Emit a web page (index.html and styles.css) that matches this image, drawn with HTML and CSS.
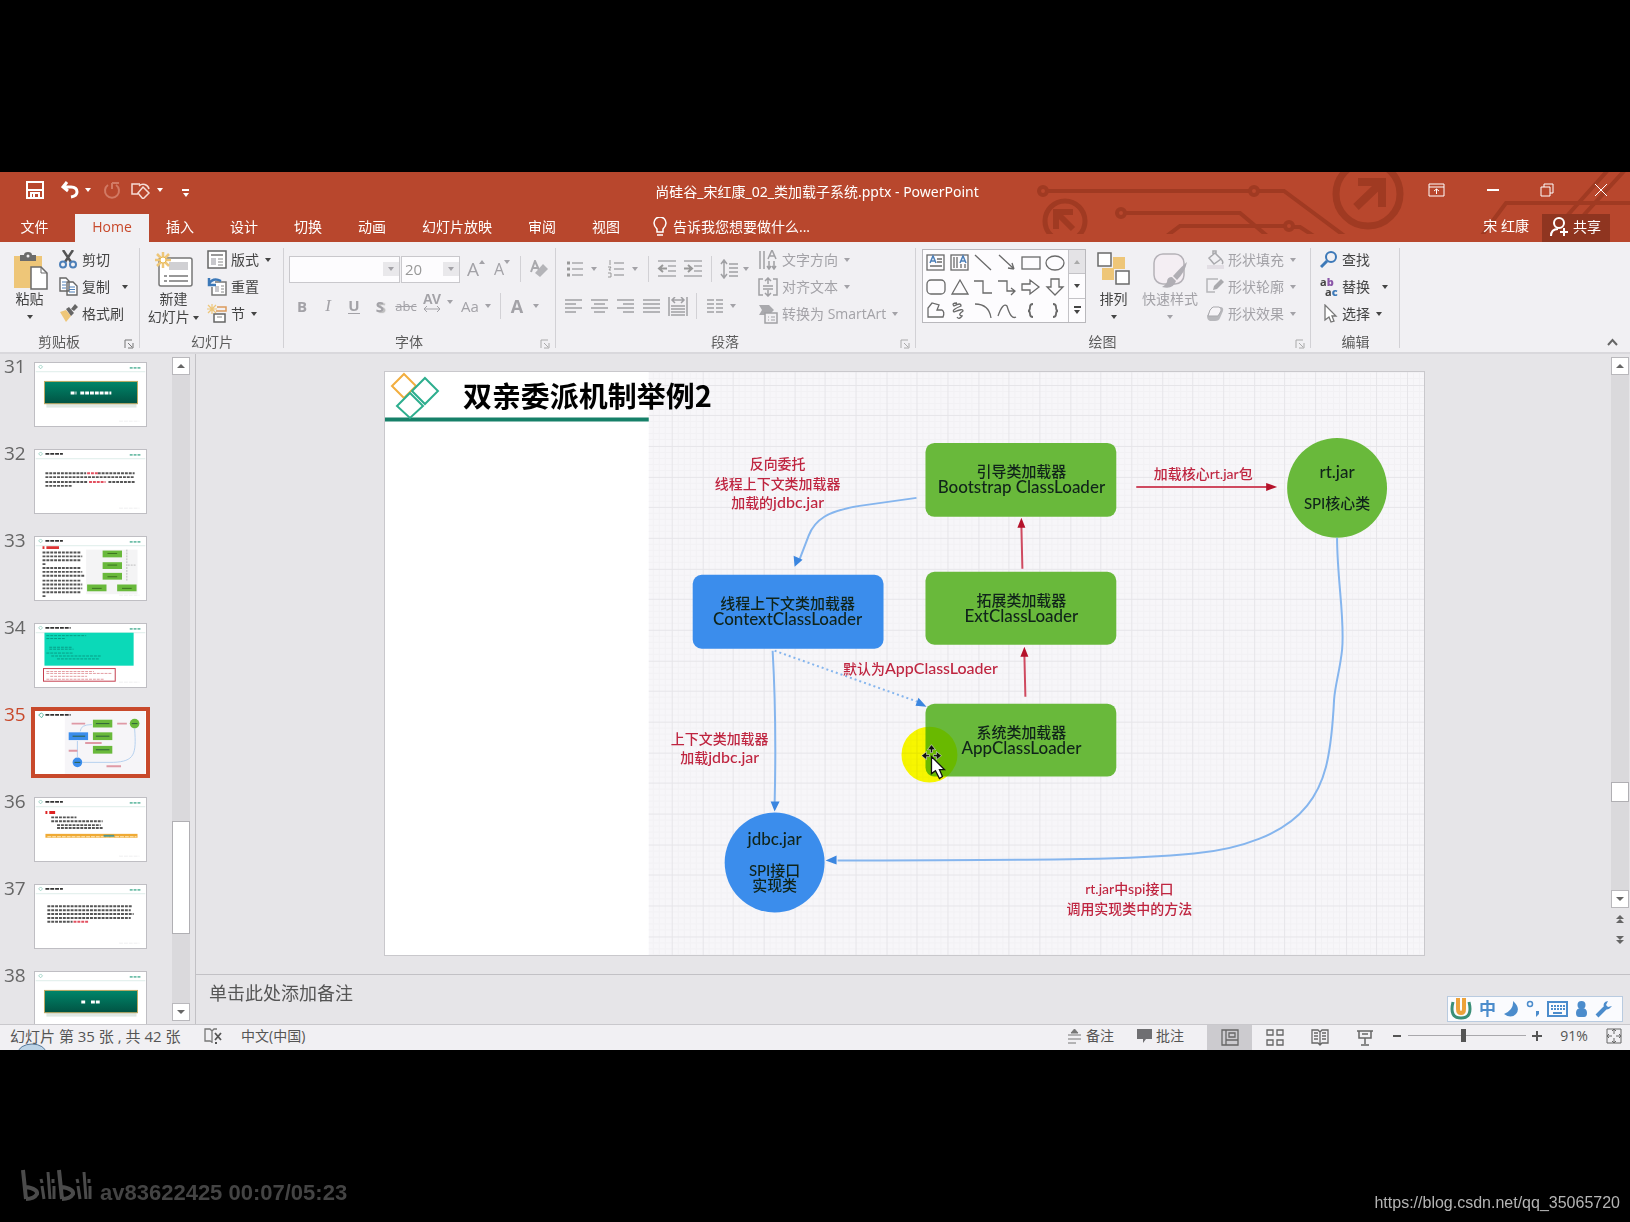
FILE: index.html
```html
<!DOCTYPE html>
<html lang="zh-CN">
<head>
<meta charset="utf-8">
<title>尚硅谷_宋红康_02_类加载子系统.pptx - PowerPoint</title>
<link rel="stylesheet" href="styles.css">
</head>
<body>
<div class="app">
  <header class="titlebar">
    <svg class="circuit" width="600" height="62" viewBox="1030 172 600 62" aria-hidden="true">
      <g fill="none" stroke="#a03a22" stroke-width="4">
        <circle cx="1043" cy="191" r="4"/><path d="M1047 191H1250M1258 191H1284L1350 240"/><circle cx="1254" cy="191" r="4"/>
        <circle cx="1121" cy="213" r="4"/><path d="M1125 213H1240L1272 240M1164 238L1180 226H1285M1293 227H1300L1320 240"/><circle cx="1289" cy="226" r="4"/>
        <path d="M1480 238L1506 203H1630M1566 217L1608 170M1582 217L1625 170"/>
        <circle cx="1065" cy="221" r="20" stroke-width="5"/><path d="M1073 229L1058 214M1056 229V212H1073" stroke-width="6"/>
        <circle cx="1368" cy="194" r="32" stroke-width="7"/><path d="M1356 207L1380 184M1358 182H1382V207" stroke-width="8"/>
      </g>
    </svg>
    <div class="toprow">
      <div class="qat">
        <button class="q save" aria-label="保存"><svg width="18" height="18" viewBox="0 0 18 18"><path d="M1 1H17V17H1ZM1 9H17M5 17V12H13V17M8 13V17" fill="none" stroke="#fff" stroke-width="2"/></svg></button>
        <button class="q undo" aria-label="撤消"><svg width="18" height="18" viewBox="0 0 18 18"><path d="M6 1L2 6L7 10M2 6H10Q16 6 16 11Q16 15 10 16" fill="none" stroke="#fff" stroke-width="3"/></svg><i class="caret"></i></button>
        <button class="q redo" aria-label="重复"><svg width="18" height="18" viewBox="0 0 18 18"><path d="M5 4A7 7 0 1 0 13 4M9 2V8M9 2H16" fill="none" stroke="#d27a64" stroke-width="2"/></svg></button>
        <button class="q" aria-label="形状"><svg width="20" height="18" viewBox="0 0 20 18"><path d="M7 13H1V3H9M8 5A6 6 0 0 1 18 8M12 6L18 12L12 18L7 12Z" fill="none" stroke="#f6dcd5" stroke-width="1.500"/></svg><i class="caret"></i></button>
        <button class="q more" aria-label="自定义快速访问工具栏"><i class="bar"></i><i class="caret"></i></button>
      </div>
      <h1 class="doc">尚硅谷_宋红康_02_类加载子系统.pptx - PowerPoint</h1>
      <div class="winbtns">
        <button aria-label="功能区显示选项"><svg width="18" height="14" viewBox="0 0 18 14"><path d="M1 1H16V13H1ZM1 4H16M8.500 11V6M6 8L8.500 6L11 8" fill="none" stroke="#fff"/></svg></button>
        <button aria-label="最小化"><svg width="14" height="14" viewBox="0 0 14 14"><path d="M1 7H13" stroke="#fff" stroke-width="2"/></svg></button>
        <button aria-label="还原"><svg width="14" height="14" viewBox="0 0 14 14"><path d="M1 4H10V13H1ZM4 4V1H13V10H10" fill="none" stroke="#fff"/></svg></button>
        <button aria-label="关闭"><svg width="14" height="14" viewBox="0 0 14 14"><path d="M1 1L13 13M13 1L1 13" stroke="#fff"/></svg></button>
      </div>
    </div>
    <nav class="tabs">
      <button class="tab file">文件</button>
      <button class="tab on">Home</button>
      <button class="tab">插入</button>
      <button class="tab">设计</button>
      <button class="tab">切换</button>
      <button class="tab">动画</button>
      <button class="tab">幻灯片放映</button>
      <button class="tab">审阅</button>
      <button class="tab">视图</button>
      <button class="tell"><svg width="14" height="20" viewBox="0 0 14 20"><path d="M4 15V12Q1 9 1 6A5.500 5.500 0 0 1 13 6Q13 9 10 12V15ZM4 18H10" fill="none" stroke="#fff" stroke-width="1.500"/></svg>告诉我您想要做什么...</button>
      <span class="user">宋 红康</span>
      <button class="share"><svg width="18" height="20" viewBox="0 0 18 20"><circle cx="9" cy="6" r="5" fill="none" stroke="#fff" stroke-width="2"/><path d="M1 19Q1 12 8 12M14 11V19M10 15H18" fill="none" stroke="#fff" stroke-width="2"/></svg>共享</button>
    </nav>
  </header>

  <section class="ribbon" aria-label="Home">
    <div class="group g-clip">
      <div class="gbody">
        <button class="large"><svg width="36" height="38" viewBox="0 0 36 38"><rect x="2" y="4" width="28" height="32" fill="#eec678"/><path d="M8 3H12Q12 0 16 0Q20 0 20 3H24V9H8Z" fill="#6b6b6b"/><circle cx="16" cy="4" r="1.500" fill="#f1f0f3"/><path d="M19 15H29L35 21V37H19Z" fill="#fff" stroke="#6b6b6b" stroke-width="1.500"/><path d="M29 15V21H35" fill="none" stroke="#6b6b6b"/></svg><span>粘贴</span><i class="caret"></i></button>
        <div class="stack">
          <button class="small"><svg width="19" height="19" viewBox="0 0 19 19"><path d="M4 0L12 12M14 0L6 12" stroke="#555" stroke-width="2.500"/><circle cx="4" cy="14.500" r="3" fill="none" stroke="#4c7fb8" stroke-width="2"/><circle cx="14" cy="14.500" r="3" fill="none" stroke="#4c7fb8" stroke-width="2"/></svg>剪切</button>
          <button class="small copy"><svg width="19" height="19" viewBox="0 0 19 19"><path d="M1 1H7L10 4V14H1ZM8 5H14L18 9V18H8Z" fill="#fff" stroke="#666" stroke-width="1.400"/><path d="M3 5H7M3 8H7M3 11H7M10 10H16M10 12.500H16M10 15H16" stroke="#4c7fb8"/></svg>复制<i class="caret"></i></button>
          <button class="small"><svg width="19" height="19" viewBox="0 0 19 19"><path d="M1 8L7 6L12 12L7 18Z" fill="#eec678"/><path d="M7 5L10 3L15 9L12 12ZM12 5L16 0L19 3L15 7Z" fill="#666"/></svg>格式刷</button>
        </div>
      </div>
      <div class="glabel"><span>剪贴板</span><button class="launch" aria-label="剪贴板设置"><svg width="10" height="10" viewBox="0 0 10 10"><path d="M1 9V1H8M4 4L8 8M9 4V9H4" fill="none" stroke="#777"/></svg></button></div>
    </div>

    <div class="group g-slides">
      <div class="gbody">
        <button class="large"><svg width="38" height="38" viewBox="0 0 38 38"><rect x="4" y="6" width="33" height="28" rx="2" fill="#fff" stroke="#777" stroke-width="1.500"/><rect x="14" y="10" width="19" height="8" fill="#d0d0d3"/><path d="M9 24H12M14 24H33M9 29H12M14 29H33" stroke="#777" stroke-width="1.500"/><path d="M8 0V16M0 8H16M2 2L14 14M14 2L2 14" stroke="#eec678" stroke-width="2.500"/><circle cx="8" cy="8" r="3" fill="#fff" stroke="#e9b950"/></svg><span>新建</span><span>幻灯片 <i class="caret"></i></span></button>
        <div class="stack">
          <button class="small"><svg width="20" height="19" viewBox="0 0 20 19"><rect x="1" y="1" width="18" height="17" fill="#fff" stroke="#666" stroke-width="1.500"/><path d="M4 5H16" stroke="#999" stroke-width="2"/><rect x="4" y="8" width="5" height="7" fill="#c8c8cc"/><path d="M11 9H16M11 12H16M11 15H16" stroke="#888"/></svg>版式<i class="caret"></i></button>
          <button class="small"><svg width="20" height="19" viewBox="0 0 20 19"><path d="M8 5H19V18H5V10" fill="#fff" stroke="#777" stroke-width="1.500"/><rect x="8" y="9" width="4" height="6" fill="#c8c8cc"/><path d="M14 9H17M14 12H17M14 15H17" stroke="#888"/><path d="M2 1V8H9M2 7Q6 0 14 4" fill="none" stroke="#3d79b8" stroke-width="2.500"/></svg>重置</button>
          <button class="small"><svg width="20" height="19" viewBox="0 0 20 19"><path d="M5 0V10M0 5H10M1 1L9 9M9 1L1 9" stroke="#eec678" stroke-width="1.200"/><path d="M10 3H19V7H9" fill="none" stroke="#dc9b5c" stroke-width="1.500"/><rect x="7" y="10" width="11" height="8" fill="#fff" stroke="#666" stroke-width="1.500"/><path d="M10 13H15" stroke="#888"/></svg>节<i class="caret"></i></button>
        </div>
      </div>
      <div class="glabel"><span>幻灯片</span></div>
    </div>

    <div class="group g-font dim">
      <div class="gbody">
        <div class="rows">
        <div class="row">
          <span class="combo name"><input aria-label="字体" value=""><i class="caret"></i></span>
          <span class="combo size"><input aria-label="字号" value="20"><i class="caret"></i></span>
          <button class="tool grow" aria-label="增大字号">A<i class="caret up"></i></button>
          <button class="tool shrink" aria-label="减小字号">A<i class="caret"></i></button>
          <i class="vsep"></i>
          <button class="tool" aria-label="清除格式"><svg width="18" height="19" viewBox="0 0 18 19"><path d="M1 12L5 1L9 10M2 8H8" fill="none" stroke="#a9a9ad" stroke-width="2"/><path d="M5 13L13 4L18 9L10 17Z" fill="#b4b4b8"/></svg></button>
        </div>
        <div class="row">
          <button class="tool"><b>B</b></button>
          <button class="tool"><em>I</em></button>
          <button class="tool"><b class="ul">U</b></button>
          <button class="tool"><b class="sh">S</b></button>
          <button class="tool strike">abc</button>
          <button class="tool wide av" aria-label="字符间距"><span>AV<svg width="18" height="6" viewBox="0 0 18 6"><path d="M1 3H17M4 0L1 3L4 6M14 0L17 3L14 6" fill="none" stroke="#a3a2a7"/></svg></span><i class="caret"></i></button>
          <button class="tool wide"><span>Aa</span><i class="caret"></i></button>
          <i class="vsep"></i>
          <button class="tool wide color"><b>A</b><i class="caret gap"></i></button>
        </div>
        </div>
      </div>
      <div class="glabel"><span>字体</span><button class="launch" aria-label="字体设置"><svg width="10" height="10" viewBox="0 0 10 10"><path d="M1 9V1H8M4 4L8 8M9 4V9H4" fill="none" stroke="#aaa"/></svg></button></div>
    </div>

    <div class="group g-para dim">
      <div class="gbody">
        <div class="rows para">
          <div class="row">
            <button class="tool list" aria-label="项目符号"><svg width="18" height="18" viewBox="0 0 18 18"><path d="M6 3H17M6 9H17M6 15H17" stroke="#a9a9ad" stroke-width="1.500"/><path d="M1 3H4M1 9H4M1 15H4" stroke="#999" stroke-width="3"/></svg><i class="caret"></i></button>
            <button class="tool list" aria-label="编号"><svg width="18" height="18" viewBox="0 0 18 18"><path d="M7 3H17M7 9H17M7 15H17" stroke="#a9a9ad" stroke-width="1.500"/><path d="M3 0V5M1 7H4L2 10H4M1 13H4V17H1" fill="none" stroke="#999"/></svg><i class="caret"></i></button>
            <i class="vsep"></i>
            <button class="tool" aria-label="减少缩进"><svg width="20" height="18" viewBox="0 0 20 18"><path d="M1 1H19M11 6H19M11 11H19M1 16H19" stroke="#a9a9ad" stroke-width="1.500"/><path d="M10 8.500H3M6 5L2 8.500L6 12" fill="none" stroke="#999" stroke-width="2"/></svg></button>
            <button class="tool" aria-label="增加缩进"><svg width="20" height="18" viewBox="0 0 20 18"><path d="M1 1H19M11 6H19M11 11H19M1 16H19" stroke="#a9a9ad" stroke-width="1.500"/><path d="M1 8.500H8M5 5L9 8.500L5 12" fill="none" stroke="#999" stroke-width="2"/></svg></button>
            <i class="vsep"></i>
            <button class="tool spacing" aria-label="行距"><svg width="18" height="20" viewBox="0 0 18 20"><path d="M4 2V18M1 5L4 1L7 5M1 15L4 19L7 15M9 5H18M9 9H18M9 13H18M9 17H18" fill="none" stroke="#a0a0a4" stroke-width="1.500"/></svg><i class="caret"></i></button>
          </div>
          <div class="row">
            <button class="tool" aria-label="左对齐"><svg width="18" height="14" viewBox="0 0 18 14"><path d="M0 1H17M0 5H11M0 9H17M0 13H11" stroke="#a0a0a4" stroke-width="1.500"/></svg></button>
            <button class="tool" aria-label="居中"><svg width="18" height="14" viewBox="0 0 18 14"><path d="M0 1H17M3 5H14M0 9H17M3 13H14" stroke="#a0a0a4" stroke-width="1.500"/></svg></button>
            <button class="tool" aria-label="右对齐"><svg width="18" height="14" viewBox="0 0 18 14"><path d="M0 1H17M6 5H17M0 9H17M6 13H17" stroke="#a0a0a4" stroke-width="1.500"/></svg></button>
            <button class="tool" aria-label="两端对齐"><svg width="18" height="14" viewBox="0 0 18 14"><path d="M0 1H17M0 5H17M0 9H17M0 13H17" stroke="#a0a0a4" stroke-width="1.500"/></svg></button>
            <button class="tool" aria-label="分散对齐"><svg width="20" height="19" viewBox="0 0 20 19"><path d="M1 0V19M19 0V19M4 3H16M7 0L4 3L7 6M13 0L16 3L13 6M3 9H17M3 12H17M3 15H17M3 18H17" fill="none" stroke="#a0a0a4" stroke-width="1.500"/></svg></button>
            <i class="vsep"></i>
            <button class="tool wide" aria-label="分栏"><svg width="17" height="14" viewBox="0 0 17 14"><path d="M0 1H7M9 1H16M0 5H7M9 5H16M0 9H7M9 9H16M0 13H7M9 13H16" stroke="#a0a0a4" stroke-width="1.500"/></svg><i class="caret"></i></button>
          </div>
        </div>
        <div class="stack">
          <button class="small"><svg width="20" height="20" viewBox="0 0 20 20"><path d="M2 1V19M6 1V19M11 11V19M16 11V19M9 16L11 19L13 16M14 16L16 19L18 16M10 9L14 0L18 9M11 6H17" fill="none" stroke="#a0a0a4" stroke-width="1.500"/></svg>文字方向<i class="caret"></i></button>
          <button class="small"><svg width="20" height="20" viewBox="0 0 20 20"><path d="M5 2H1V18H5M15 2H19V18H15M10 1V7M7 4L10 1L13 4M10 13V19M7 16L10 19L13 16M5 9H15M5 12H15" fill="none" stroke="#a0a0a4" stroke-width="1.500"/></svg>对齐文本<i class="caret"></i></button>
          <button class="small"><svg width="20" height="20" viewBox="0 0 20 20"><path d="M1 1H11L16 6L13 9H7V11H1L4 6Z" fill="#a9a9ad"/><rect x="7" y="9" width="12" height="10" fill="#f1f0f3" stroke="#a0a0a4" stroke-width="1.500"/><path d="M10 13H11M13 13H17M10 16H11M13 16H17" stroke="#a0a0a4"/></svg>转换为 SmartArt<i class="caret"></i></button>
        </div>
      </div>
      <div class="glabel"><span>段落</span><button class="launch" aria-label="段落设置"><svg width="10" height="10" viewBox="0 0 10 10"><path d="M1 9V1H8M4 4L8 8M9 4V9H4" fill="none" stroke="#aaa"/></svg></button></div>
    </div>

    <div class="group g-draw">
      <div class="gbody">
        <div class="gallery">
          <svg width="145" height="72" viewBox="0 0 145 72"><g fill="none" stroke="#6a6a6a" stroke-width="1.300">
            <rect x="4" y="5" width="17" height="15"/><path d="M14 9H19M14 12H19M7 16H19"/><rect x="28" y="5" width="17" height="15"/><path d="M31 7V18M34 7V18M38 14V18M42 14V18"/>
            <path d="M52 5L68 20M76 5L90 18M91 19L85 18M91 19L89 13"/><rect x="99" y="7" width="18" height="12"/><ellipse cx="132" cy="13" rx="9" ry="7"/>
            <rect x="4" y="30" width="18" height="14" rx="4"/><path d="M37 30L45 44H29ZM51 31H60V43H69M75 31H84V41H92M88 38L92 41L88 45M99 34H107V30L116 37L107 44V40H99ZM128 29H136V37H140L132 45L124 37H128Z"/>
            <path d="M5 67V58L9 53L16 55L14 60H19Q22 62 20 67ZM34 53Q28 53 31 56Q38 52 38 56Q28 60 31 62Q40 58 40 61Q34 65 39 66Q36 70 34 67M52 54Q66 54 68 68M75 66Q80 52 84 56Q88 70 93 67"/><path d="M110 54Q107 54 107 57Q107 61 105 61Q107 61 107 64Q107 67 110 67M130 54Q133 54 133 57Q133 61 135 61Q133 61 133 64Q133 67 130 67" stroke-width="1.800"/></g>
            <path d="M7 13L10 6L13 13M8 11H12M37 13L40 6L43 13M38 11H42" fill="none" stroke="#4c7fb8" stroke-width="1.500"/></svg>
          <div class="gscroll"><button class="off" aria-label="上一行"><i class="caret up"></i></button><button aria-label="下一行"><i class="caret"></i></button><button aria-label="更多形状"><i class="bar"></i><i class="caret"></i></button></div>
        </div>
        <button class="large arrange"><svg width="34" height="38" viewBox="0 0 34 38"><rect x="16" y="5" width="12" height="12" fill="#eec678"/><rect x="5" y="16" width="12" height="12" fill="#eec678"/><rect x="1" y="1" width="13" height="13" fill="#fff" stroke="#6a6a6a" stroke-width="1.500"/><rect x="19" y="19" width="13" height="13" fill="#fff" stroke="#6a6a6a" stroke-width="1.500"/></svg><span>排列</span><i class="caret"></i></button>
        <button class="large quick dim"><svg width="36" height="38" viewBox="0 0 36 38"><rect x="2" y="2" width="30" height="30" rx="9" fill="#f4eef3" stroke="#b5b2b8" stroke-width="1.500"/><path d="M35 10Q32 12 21 24L25 28Q33 20 35 10Z" fill="#b0aeb4"/><path d="M20 25Q15 25 15 30Q13 34 10 35Q21 38 24 29Z" fill="#b0aeb4"/></svg><span>快速样式</span><i class="caret"></i></button>
        <div class="stack dim">
          <button class="small"><svg width="18" height="19" viewBox="0 0 18 19"><rect x="1" y="15" width="17" height="4" fill="#e2dee4"/><path d="M3 8L9 3L15 9L8 14ZM7 5V1H10V5M15 9Q18 12 16 14" fill="none" stroke="#a9a9ad" stroke-width="1.500"/></svg>形状填充<i class="caret"></i></button>
          <button class="small"><svg width="18" height="19" viewBox="0 0 18 19"><path d="M12 2H1V15H9" fill="none" stroke="#b5b5b9" stroke-width="1.500"/><path d="M7 13L8 9L15 2L18 5L11 12Z" fill="#a9a9ad"/></svg>形状轮廓<i class="caret"></i></button>
          <button class="small"><svg width="18" height="19" viewBox="0 0 18 19"><path d="M6 3H14Q18 3 17 7L14 14Q13 17 9 17H4Q1 16 1 12Z" fill="#b8b8bc"/><path d="M7 3H13Q16 4 15 7L12 12H2L4 6Z" fill="#f6f4f7" stroke="#a9a9ad"/></svg>形状效果<i class="caret"></i></button>
        </div>
      </div>
      <div class="glabel"><span>绘图</span><button class="launch" aria-label="绘图设置"><svg width="10" height="10" viewBox="0 0 10 10"><path d="M1 9V1H8M4 4L8 8M9 4V9H4" fill="none" stroke="#aaa"/></svg></button></div>
    </div>

    <div class="group g-edit">
      <div class="gbody"><div class="stack">
        <button class="small"><svg width="18" height="18" viewBox="0 0 18 18"><circle cx="11" cy="6" r="5" fill="none" stroke="#3d79b8" stroke-width="2"/><path d="M7 10L1 16" stroke="#3d79b8" stroke-width="3"/></svg>查找</button>
        <button class="small replace"><span class="abac" aria-hidden="true"><span>a<b class="p">b</b></span><span class="ac">a<b class="c">c</b></span></span>替换<i class="caret"></i></button>
        <button class="small"><svg width="18" height="20" viewBox="0 0 18 20"><path d="M5 1V16L9 13L11 18L14 17L12 12H16Z" fill="#fff" stroke="#777" stroke-width="1.300"/></svg>选择<i class="caret"></i></button>
      </div></div>
      <div class="glabel"><span>编辑</span></div>
    </div>
    <button class="collapse" aria-label="折叠功能区"><svg width="11" height="8" viewBox="0 0 11 8"><path d="M1 7L5.500 2L10 7" fill="none" stroke="#666" stroke-width="2"/></svg></button>
  </section>

  <main class="work">
    <aside class="thumbs">
      <ol class="list-slides" start="31">
        <li><span>31</span><svg viewBox="0 0 113 65"><use href="#head"/><defs><linearGradient id="gg" x2="0" y2="1"><stop stop-color="#00866a"/><stop offset="1" stop-color="#015343"/></linearGradient></defs><rect x="11" y="42" width="93" height="4" fill="#dfe8e4"/><rect x="9" y="19" width="96" height="23" fill="url(#gg)" stroke="#c0a860"/><path d="M36 31H42M46 31H78" stroke="#fff" stroke-width="3" stroke-dasharray="4 1"/></svg></li>
        <li><span>32</span><svg viewBox="0 0 113 65"><use href="#head"/><path d="M10 4H28" class="k"/><path d="M10 24H52M64 24H102M10 28H102M10 33H54M75 33H102M10 37H38" class="t"/><path d="M53 24H64M55 33H72" class="r"/></svg></li>
        <li><span>33</span><svg viewBox="0 0 113 65"><use href="#head"/><path d="M10 4H28" class="k"/><rect x="52" y="13" width="53" height="46" fill="#f4f4f5"/><path d="M7 11H9M11 11H24" stroke="#d33" stroke-width="3"/><path d="M7 16H46M7 20H48M7 24H47M7 28H10M7 32H46M7 36H48M7 40H50M7 45H46M7 49H48M7 53H48M7 57H46M7 61H10" class="t"/><g fill="#69b93b"><rect x="69" y="14" width="20" height="7"/><rect x="69" y="26" width="20" height="7"/><rect x="69" y="37" width="20" height="7"/><rect x="53" y="49" width="20" height="7"/><rect x="84" y="49" width="20" height="7"/></g><path d="M74 17H84M74 29H84M74 41H84M58 53H68M89 53H99" stroke="#3a7020"/><path d="M94 13V45M95 29H103" stroke="#bbb" stroke-dasharray="2 1"/></svg></li>
        <li><span>34</span><svg viewBox="0 0 113 65"><use href="#head"/><path d="M10 4H36" class="k"/><rect x="9" y="9" width="92" height="34" fill="#0bd9b8"/><path d="M11 12H52M11 15H30M14 24H37M14 26H39M11 30H38M16 33H68M22 36H66" stroke="#079c85" stroke-dasharray="3 1"/><rect x="8" y="46" width="74" height="13" fill="#fff" stroke="#c43a4a"/><path d="M11 49H60M11 51H78M15 54H53M11 57H71" stroke="#e29ba0" stroke-dasharray="3 1"/></svg></li>
        <li class="sel"><span>35</span><svg viewBox="0 0 113 65"><path d="M3 4L6 2L8 4L6 7Z" fill="none" stroke="#5fb9a2"/><rect x="30" y="0" width="83" height="65" fill="#f6f5f8"/><path d="M10 4H36" class="k"/><g fill="#69b93b"><rect x="59" y="9" width="20" height="8"/><rect x="59" y="22" width="20" height="8"/><rect x="59" y="36" width="20" height="8"/><circle cx="102" cy="13" r="5"/></g><g fill="#3b8dec"><rect x="34" y="22" width="20" height="8"/><circle cx="43" cy="53" r="5"/></g><path d="M102 18C104 45 102 52 80 53H48M43 31V48M58 14Q46 14 46 21" fill="none" stroke="#b4cfee"/><path d="M37 13H51M84 13H94M51 33H68M34 41H43M73 57H88" stroke="#df99a5" stroke-width="2"/><path d="M62 13H76M62 26H76M62 40H76M38 26H51M99 13H105M40 53H46" stroke="#2d5f3a"/></svg></li>
        <li><span>36</span><svg viewBox="0 0 113 65"><use href="#head"/><path d="M10 4H28" class="k"/><path d="M10 15H12M14 15H20" stroke="#d22" stroke-width="3"/><path d="M16 20H42M16 24H69M22 28H67M22 31H69" class="t"/><rect x="10" y="37" width="95" height="4" fill="#efaa35"/><path d="M12 40H104" stroke="#fff0c8" stroke-dasharray="4 1"/><path d="M70 39H81" stroke="#51968b" stroke-width="2"/></svg></li>
        <li><span>37</span><svg viewBox="0 0 113 65"><use href="#head"/><path d="M10 4H28" class="k"/><path d="M12 22H100M12 26H98M12 30H101M12 34H98M12 38H38" class="t"/><path d="M39 38H55" class="r"/></svg></li>
        <li><span>38</span><svg viewBox="0 0 113 65"><use href="#head"/><rect x="11" y="42" width="93" height="4" fill="#dfe8e4"/><rect x="9" y="19" width="96" height="23" fill="url(#gg)" stroke="#c0a860"/><path d="M47 31H52M57 31H67" stroke="#fff" stroke-width="3" stroke-dasharray="4 1"/></svg></li>
      </ol>
      <div class="vbar"><button aria-label="向上滚动"><i class="caret up"></i></button><div class="track"><i class="thumb"></i></div><button aria-label="向下滚动"><i class="caret"></i></button></div>
    </aside>

    <section class="editor">
      <div class="stagewrap">
        <div class="stage">
          <svg class="slide" viewBox="385 372 1040 584" role="img" aria-label="双亲委派机制举例2">
            <defs>
              <pattern id="grid" x="672" y="446" width="92" height="92" patternUnits="userSpaceOnUse">
                <path d="M6.500 0V92M12.500 0V92M18.500 0V92M24.500 0V92M37.500 0V92M43.500 0V92M49.500 0V92M55.500 0V92M67.500 0V92M73.500 0V92M79.500 0V92M85.500 0V92M0 6.500H92M0 12.500H92M0 18.500H92M0 24.500H92M0 37.500H92M0 43.500H92M0 49.500H92M0 55.500H92M0 67.500H92M0 73.500H92M0 79.500H92M0 85.500H92" stroke="#f2f1f4"/>
                <path d="M.5 0V92M31.500 0V92M61.500 0V92M0 .5H92M0 31.500H92M0 61.500H92" stroke="#e6e5e9"/>
              </pattern>
            </defs>
            <rect x="385" y="372" width="1040" height="584" fill="#fff"/>
            <rect x="649" y="372" width="776" height="584" fill="#f7f6f9"/>
            <rect x="649" y="372" width="776" height="584" fill="url(#grid)"/>
            <path d="M385 419.500H649" stroke="#168069" stroke-width="4"/>
            <g fill="#fff" stroke-width="2"><path d="M404 374L416 386L404 398L392 386Z" stroke="#f2ae3f"/><path d="M425 378L438 391L425 404L412 391Z" stroke="#2dae8e"/><path d="M410 393L423 406L410 418L397 406Z" stroke="#2dae8e"/></g>
            <text x="463" y="407" class="title">双亲委派机制举例2</text>

            <g fill="#69b93b"><rect x="926" y="443" width="191" height="74" rx="9"/><rect x="926" y="572" width="191" height="73" rx="9"/><rect x="926" y="704" width="191" height="73" rx="9"/><circle cx="1338" cy="488" r="50"/></g>
            <g fill="#3b8dec"><rect x="693" y="575" width="191" height="74" rx="9"/><circle cx="775" cy="863" r="50"/></g>

            <g fill="none" stroke="#85b5ee" stroke-width="2">
              <path d="M917 498L860 506C828 511 815 520 809 536L799 562"/>
              <path d="M773 651Q777 720 775 804"/>
              <path d="M775 651L918 702" stroke-dasharray="2 3"/>
              <path d="M1338 538C1338 580 1346 620 1343 650C1341 670 1336 685 1335 700C1332 760 1325 785 1308 806C1285 835 1240 850 1195 854C1110 862 1000 860 838 861"/>
            </g>
            <path d="M795 567L794 556L803 560ZM775 812L771 802H780ZM927 707L916 706L919 698ZM826 861L837 856V865Z" fill="#3b86e0"/>
            <path d="M1137 487H1268M1023 569L1022 526M1026 697L1025 655" stroke="#cf4a60" stroke-width="2"/>
            <path d="M1278 487L1267 483V491ZM1022 518L1018 528H1026ZM1025 647L1021 657H1029Z" fill="#b5122b"/>

            <g class="node">
              <text x="1022" y="477">引导类加载器</text><text x="1022" y="493" class="lat">Bootstrap ClassLoader</text>
              <text x="1022" y="606">拓展类加载器</text><text x="1022" y="622" class="lat">ExtClassLoader</text>
              <text x="1022" y="738">系统类加载器</text><text x="1022" y="754" class="lat">AppClassLoader</text>
              <text x="788" y="609">线程上下文类加载器</text><text x="788" y="625" class="lat">ContextClassLoader</text>
              <text x="1338" y="478" class="lat">rt.jar</text><text x="1338" y="509">SPI核心类</text>
              <text x="775" y="845" class="lat">jdbc.jar</text><text x="775" y="876">SPI接口</text><text x="775" y="892">实现类</text>
            </g>
            <g class="note">
              <text x="778" y="469">反向委托</text><text x="778" y="489">线程上下文类加载器</text><text x="778" y="508">加载的<tspan class="lat">jdbc.jar</tspan></text>
              <text x="1204" y="479">加载核心rt.jar包</text>
              <text x="921" y="674">默认为<tspan class="lat">AppClassLoader</tspan></text>
              <text x="720" y="744">上下文类加载器</text><text x="720" y="763">加载<tspan class="lat">jdbc.jar</tspan></text>
              <text x="1130" y="895">rt.jar中spi接口</text><text x="1130" y="915">调用实现类中的方法</text>
            </g>
            <circle cx="930" cy="755" r="28" fill="#ff0" class="halo"/>
            <g fill="#111"><path d="M932 745L928 750H931V753H933V750H936ZM922 756L927 752V755H930V757H927V760ZM942 756L937 752V755H934V757H937V760Z" stroke="#fff" stroke-width=".5"/><path d="M932 757V774L936 771L940 779L943 777L940 770H945Z" fill="#fff" stroke="#111" stroke-width="1.300"/></g>
          </svg>
        </div>
        <div class="vbar right"><button aria-label="上一页"><i class="caret up"></i></button><div class="track"><i class="thumb"></i></div><button aria-label="下一页"><i class="caret"></i></button>
          <button class="jump" aria-label="上一张幻灯片"><i class="caret up"></i><i class="caret up"></i></button><button class="jump" aria-label="下一张幻灯片"><i class="caret"></i><i class="caret"></i></button></div>
      </div>
      <textarea class="notes" aria-label="备注" placeholder="单击此处添加备注"></textarea>
    </section>
    <div class="ime">
      <svg width="22" height="24" viewBox="0 0 22 24"><path d="M3 5Q-1 21 11 21Q23 21 19 5" fill="none" stroke="#3a8f78" stroke-width="3"/><path d="M8 1V12Q8 16 11 16Q14 16 14 12V1" fill="none" stroke="#eda23a" stroke-width="4"/></svg>
      <b>中</b>
      <svg width="16" height="18" viewBox="0 0 16 18"><path d="M10 1Q11 10 1 14Q8 19 13 14Q18 8 10 1Z" fill="#4b8ccc"/></svg>
      <svg width="14" height="18" viewBox="0 0 14 18"><circle cx="4" cy="4" r="2.500" fill="none" stroke="#4b8ccc" stroke-width="1.500"/><path d="M10 11H13V14L10 17Z" fill="#4b8ccc"/></svg>
      <svg width="21" height="16" viewBox="0 0 21 16"><rect x="1" y="1" width="19" height="14" fill="none" stroke="#4b8ccc" stroke-width="2"/><path d="M4 5H18M4 8H18" stroke="#4b8ccc" stroke-width="2" stroke-dasharray="2 1"/><path d="M6 12H15" stroke="#4b8ccc" stroke-width="2"/></svg>
      <svg width="13" height="18" viewBox="0 0 13 18"><circle cx="6.500" cy="5" r="4" fill="#4b8ccc"/><path d="M1 13Q1 8 6.500 8Q12 8 12 13Q12 17 9 17H4Q1 17 1 13Z" fill="#4b8ccc"/></svg>
      <svg width="18" height="18" viewBox="0 0 18 18"><path d="M2 16L10 8" stroke="#4b8ccc" stroke-width="4"/><path d="M13 1Q7 2 9 8Q12 12 17 6L13 7L11 5Z" fill="#4b8ccc"/></svg>
    </div>
  </main>

  <footer class="status">
    <span class="count">幻灯片 第 35 张 , 共 42 张</span>
    <button class="proof" aria-label="拼写检查"><svg width="18" height="16" viewBox="0 0 18 16"><path d="M8 14L6 13H1V1H6L8 3L10 1H13M8 3V15" fill="none" stroke="#777" stroke-width="1.300"/><path d="M11 5L17 12M17 5L11 12M11 15H13" stroke="#555" stroke-width="1.800"/></svg></button>
    <button class="lang">中文(中国)</button>
    <button class="st first"><svg width="15" height="16" viewBox="0 0 15 16"><path d="M4 5L7.500 1L11 5ZM1 7H14M1 11H14M1 15H9" fill="#777" stroke="#777"/></svg>备注</button>
    <button class="st"><svg width="15" height="16" viewBox="0 0 15 16"><path d="M0 1H15V11H9L6 15V11H0Z" fill="#6f6f72"/></svg>批注</button>
    <div class="views">
      <button class="cur" aria-label="普通视图"><svg width="18" height="18" viewBox="0 0 18 18"><path d="M1 1H17V16H1ZM5 1V16M5 11H17M8 4H14V8H8Z" fill="none" stroke="#666" stroke-width="1.300"/></svg></button>
      <button aria-label="幻灯片浏览"><svg width="18" height="18" viewBox="0 0 18 18"><path d="M1 1H7V6H1ZM11 1H17V6H11ZM1 11H7V16H1ZM11 11H17V16H11Z" fill="none" stroke="#666" stroke-width="1.300"/></svg></button>
      <button aria-label="阅读视图"><svg width="18" height="18" viewBox="0 0 18 18"><path d="M9 3L7 1H1V14H7L9 16L11 14H17V1H11ZM9 3V16M3 4H7M3 7H7M3 10H7M11 4H15M11 7H15M11 10H15" fill="none" stroke="#666" stroke-width="1.300"/></svg></button>
      <button aria-label="幻灯片放映"><svg width="18" height="18" viewBox="0 0 18 18"><path d="M1 2H17M3 2V9H15V2M6 5H12M9 9V15M5 16H13" fill="none" stroke="#666" stroke-width="1.500"/></svg></button>
    </div>
    <button class="pm" aria-label="缩小"><svg width="9" height="10" viewBox="0 0 9 10"><path d="M0 5H8" stroke="#555" stroke-width="2"/></svg></button>
    <input class="zoom" type="range" min="0" max="100" value="47" aria-label="缩放">
    <button class="pm" aria-label="放大"><svg width="10" height="10" viewBox="0 0 10 10"><path d="M0 5H10M5 0V10" stroke="#555" stroke-width="2"/></svg></button>
    <button class="pct">91%</button>
    <button class="fit" aria-label="使幻灯片适应窗口"><svg width="16" height="16" viewBox="0 0 16 16"><path d="M1 1H15V15H1ZM8 2V6M8 10V14M2 8H6M10 8H14M6 3L8 1L10 3M6 13L8 15L10 13M3 6L1 8L3 10M13 6L15 8L13 10" fill="none" stroke="#666"/></svg></button>
    <svg class="orb" width="30" height="7" viewBox="0 0 30 7" aria-hidden="true"><ellipse cx="15" cy="10" rx="14" ry="9" fill="#bcd3e6" stroke="#55789a"/></svg>
  </footer>
</div>

<footer class="caption">
  <svg class="logo" width="72" height="34" viewBox="0 0 72 34" role="img" aria-label="bilibili"><g id="bili" fill="none" stroke="#4b4b4b" stroke-width="4"><path d="M3 1L6 30M6 18Q18 20 17 25Q14 30 6 30"/><path d="M22 17L24 30M28 3L30 30M34 17V30M21 10L22 14M33 10V14" stroke-width="3"/></g><use href="#bili" x="36"/></svg>
  <span class="av">av83622425 00:07/05:23</span>
  <a class="url" href="https://blog.csdn.net/qq_35065720">https://blog.csdn.net/qq_35065720</a>
</footer>

<svg width="0" height="0" class="defs" aria-hidden="true"><defs><g id="head"><path d="M3 4L5 2L7 4L5 6Z" fill="none" stroke="#9fd4c6"/><path d="M0 9H113" stroke="#dcebe8"/><path d="M97 5H109" stroke="#6fbfa9" stroke-width="2" stroke-dasharray="3 1"/><path d="M86 60H107" stroke="#eeeef0" stroke-dasharray="4 1"/></g></defs></svg>
</body>
</html>
```
FILE: styles.css
```css
* { box-sizing: border-box; }
body {
  margin: 0;
  min-height: 100vh;
  padding-top: 172px;
  display: flex;
  flex-direction: column;
  background: #000;
  font-family: "Open Sans", "Noto Sans CJK SC", sans-serif;
  font-size: 14px;
  line-height: 18px;
  color: #444;
}
button { border: 0; padding: 0; background: none; font: inherit; color: inherit; white-space: nowrap; }
svg { flex: none; display: block; }
.defs { position: absolute; }
i { font-style: normal; }
.caret { flex: none; display: inline-block; border: 3px solid transparent; border-top: 4px solid currentColor; border-bottom: 0; }
.caret.up { border-top: 0; border-bottom: 4px solid currentColor; }
.bar { display: block; width: 7px; height: 2px; background: currentColor; }

/* title bar */
.titlebar { position: relative; background: #b8472d; color: #fff; }
.circuit { position: absolute; right: 0; top: 0; }
.toprow { position: relative; display: grid; grid-template-columns: 1fr auto 1fr; align-items: center; height: 42px; padding: 0 22px 6px 26px; }
.qat { display: flex; align-items: center; }
.q { display: flex; align-items: center; gap: 6px; margin-right: 12px; }
.q.save { margin-right: 17px; }
.q.redo { margin-right: 10px; }
.q.more { flex-direction: column; gap: 2px; margin: 6px 0 0 7px; }
.doc { margin: 4px 0 0; font: 14px/20px "Noto Sans", "Noto Sans CJK SC", sans-serif; }
.winbtns { display: flex; justify-content: flex-end; gap: 40px; }
.tabs { position: relative; display: flex; height: 28px; align-items: stretch; padding-right: 20px; }
.tab { padding: 0 18px 2px; line-height: 24px; }
.tab.file { width: 75px; padding: 0 6px 2px 0; }
.tab.on { width: 74px; padding: 0 0 2px; margin-right: -1px; background: #f1f0f3; color: #c8492b; }
.tell { display: flex; align-items: center; gap: 6px; margin-left: 15px; padding-bottom: 2px; }
.user { margin-left: auto; padding-right: 13px; line-height: 24px; }
.share { display: flex; align-items: center; gap: 5px; padding: 0 9px 2px 8px; background: #8f3520; }

/* ribbon */
.ribbon { display: flex; height: 112px; background: #f1f0f3; border-bottom: 2px solid #d9d8dc; }
.group { position: relative; display: flex; flex-direction: column; flex: none; padding-top: 4px; }
.group::after { content: ""; position: absolute; right: 0; top: 6px; bottom: 4px; width: 1px; background: #d2d1d5; }
.gbody { display: flex; align-items: flex-start; height: 85px; }
.glabel { display: flex; align-items: center; height: 21px; text-align: center; color: #5c5c5c; }
.glabel span { flex: 1; }
.launch { width: 22px; padding: 4px 6px 0; }
.g-clip { width: 140px; }
.g-slides { width: 144px; }
.g-font { width: 272px; }
.g-para { width: 360px; }
.g-draw { width: 395px; }
.g-edit { width: 89px; }
.stack { display: flex; flex-direction: column; }
.small { display: flex; align-items: center; gap: 4px; height: 27px; }
.small .caret { margin-left: 2px; }
.small.copy .caret, .small.replace .caret { margin-left: 8px; }
.large { display: flex; flex-direction: column; align-items: center; padding-top: 6px; }
.large > .caret { margin-top: 7px; }
.large span .caret { vertical-align: middle; }
.g-clip .large { width: 59px; }
.g-slides .large { width: 67px; }
.dim, .dim .tool { color: #a3a2a7; }
.dim .glabel { color: #5c5c5c; }
.rows { display: flex; flex-direction: column; gap: 11px; padding-top: 10px; }
.row { display: flex; align-items: center; height: 26px; }
.g-font .gbody { padding-left: 5px; }
.combo { display: flex; align-items: center; height: 27px; margin-right: 1px; border: 1px solid #c9c8cc; background: #fdfcfe; overflow: hidden; }
.combo input { flex: 1; min-width: 0; height: 24px; border: 0; padding: 0 3px; background: none; font: inherit; font-size: 15px; color: #999; }
.combo .caret { border-width: 4px 3px 0; outline: 5px solid #e9e8eb; background: #e9e8eb; margin: 0 5px; }
.combo.name { width: 111px; }
.combo.size { width: 59px; margin-right: 3px; }
.tool { display: flex; align-items: center; justify-content: center; width: 26px; height: 26px; font-size: 15px; }
.tool.wide { width: 38px; gap: 6px; }
.tool.list { width: 41px; gap: 7px; }
.tool.spacing { width: 34px; gap: 5px; }
.tool.color { font-size: 18px; }
.tool .gap { margin-left: 4px; }
.tool.grow { font-size: 19px; }
.tool.shrink { font-size: 16px; }
.grow .caret, .shrink .caret { align-self: flex-start; margin-top: 4px; }
.tool em { font-family: "Liberation Serif", serif; font-size: 17px; }
.ul { border-bottom: 1px solid; line-height: 15px; }
.sh { text-shadow: 2px 1px 1px #bbb; }
.strike { text-decoration: line-through; font-size: 13px; }
.av span { line-height: 14px; font-size: 14px; }
.vsep { width: 1px; height: 26px; margin: 0 5px; background: #d2d1d5; }
.g-para .gbody { padding-left: 5px; }
.para { width: 197px; }
.g-draw .gbody { padding-left: 6px; }
.gallery { display: flex; width: 164px; height: 74px; margin-top: 3px; border: 1px solid #b9b8bc; background: #fdfcfe; }
.gscroll { display: flex; flex-direction: column; flex: 1; border-left: 1px solid #c4c3c7; }
.gscroll button { display: flex; flex-direction: column; align-items: center; justify-content: center; gap: 2px; flex: 1; border-bottom: 1px solid #c4c3c7; }
.gscroll button:last-child { border-bottom: 0; }
.gscroll .off { background: #e4e3e6; color: #aaa; }
.arrange { width: 55px; }
.quick { width: 58px; margin-right: 7px; }
.g-edit .gbody { padding-left: 9px; }
.abac { width: 18px; font-size: 11px; line-height: 10px; font-weight: bold; text-align: left; }
.abac span { display: block; }
.abac .ac { padding-left: 5px; }
.p { color: #8b57a8; }
.c { color: #3d79b8; }
.collapse { margin: auto 12px 6px auto; }

/* work area */
.work { position: relative; display: flex; background: #e6e5e8; }
.thumbs { display: flex; justify-content: space-between; flex: none; width: 196px; height: 0; min-height: 670px; padding: 3px 5px 3px 0; border-right: 1px solid #c2c1c5; overflow: hidden; }
.list-slides { margin: 0; padding: 0; list-style: none; }
.list-slides li { display: flex; align-items: flex-start; height: 87px; padding-left: 4px; }
.list-slides span { width: 30px; font-size: 19px; line-height: 19px; color: #666; }
.list-slides svg { width: 113px; height: 65px; margin-top: 5px; background: #fff; border: 1px solid #bfbec3; }
.list-slides .sel span { color: #c8492b; }
.list-slides .sel svg { border: 1px solid #c8492b; outline: 3px solid #c8492b; }
.k { stroke: #333; stroke-width: 2; stroke-dasharray: 4 1; }
.t { stroke: #555; stroke-width: 2; stroke-dasharray: 3 1; }
.r { stroke: #e25060; stroke-width: 2; stroke-dasharray: 3 1; }
.vbar { display: flex; flex-direction: column; width: 18px; background: #dad9dc; color: #666; }
.vbar button { display: flex; align-items: center; justify-content: center; height: 18px; background: #fff; border: 1px solid #b9b8bc; }
.vbar .caret { border-left-width: 4px; border-right-width: 4px; }
.track { position: relative; flex: 1; }
.thumb { position: absolute; left: 0; right: 0; top: 71%; height: 18%; background: #fff; border: 1px solid #b0afb3; }
.editor { display: flex; flex-direction: column; flex: 1; min-width: 0; }
.stagewrap { display: flex; height: 621px; border-bottom: 1px solid #c2c1c5; }
.stage { flex: 1; min-width: 0; padding: 17px 186px 0 188px; }
.slide { width: 100%; height: auto; border: 1px solid #c9c8cc; }
.title { font: bold 29px "Noto Sans CJK SC", sans-serif; fill: #000; }
.node { font: 500 15px Lato, "Noto Sans CJK SC", sans-serif; fill: #10241a; text-anchor: middle; }
.note { font: 500 14px Lato, "Noto Sans CJK SC", sans-serif; fill: #bf2540; text-anchor: middle; }
.node .lat { font-size: 17px; }
.note .lat { font-size: 16px; }
.halo { mix-blend-mode: multiply; }
.vbar.right { margin: 3px 1px 24px 0; }
.right .thumb { top: 79%; height: 20px; }
.right .jump { flex-direction: column; height: 21px; border: 0; background: #e6e5e8; }
.notes { display: block; width: 100%; height: 49px; border: 0; padding: 6px 13px; resize: none; background: none; font: inherit; font-size: 18px; line-height: 24px; }
.notes::placeholder { color: #555; opacity: 1; }
.ime { position: absolute; right: 7px; bottom: 2px; display: flex; align-items: center; justify-content: space-between; width: 176px; height: 26px; padding: 0 9px 0 2px; background: #fafbfe; border: 1px solid #b9cbe0; color: #4b8ccc; }
.ime b { font-size: 17px; }

/* status bar */
.status { position: relative; display: flex; align-items: center; height: 26px; padding: 0 8px 4px 10px; background: #f1f0f3; border-top: 1px solid #c9c8cc; color: #555; }
.count { width: 194px; font-size: 15px; }
.proof { width: 37px; }
.st { display: flex; align-items: center; gap: 4px; margin-right: 23px; }
.st.first { margin-left: auto; }
.views { display: flex; align-self: stretch; margin: 0 6px -4px 0; }
.views button { display: flex; align-items: center; justify-content: center; width: 45px; }
.views .cur { background: #cccbcf; }
.zoom { appearance: none; width: 118px; height: 16px; margin: 0 6px; background: linear-gradient(#a9a8ac, #a9a8ac) center / 100% 1px no-repeat; }
.zoom::-webkit-slider-thumb { appearance: none; width: 5px; height: 13px; background: #555; }
.pct { width: 64px; }
.orb { position: absolute; left: 17px; bottom: 0; }

/* watermark strip */
.caption { display: flex; align-items: flex-end; margin-top: auto; padding: 0 10px 9px 20px; }
.logo { margin: 0 8px 10px 0; }
.av { margin-bottom: 8px; font: bold 22px/24px "Liberation Sans", Arial, sans-serif; color: #444; }
.url { margin-left: auto; font: 16px/20px "Liberation Sans", Arial, sans-serif; color: #b4b4b4; text-decoration: none; }
```
